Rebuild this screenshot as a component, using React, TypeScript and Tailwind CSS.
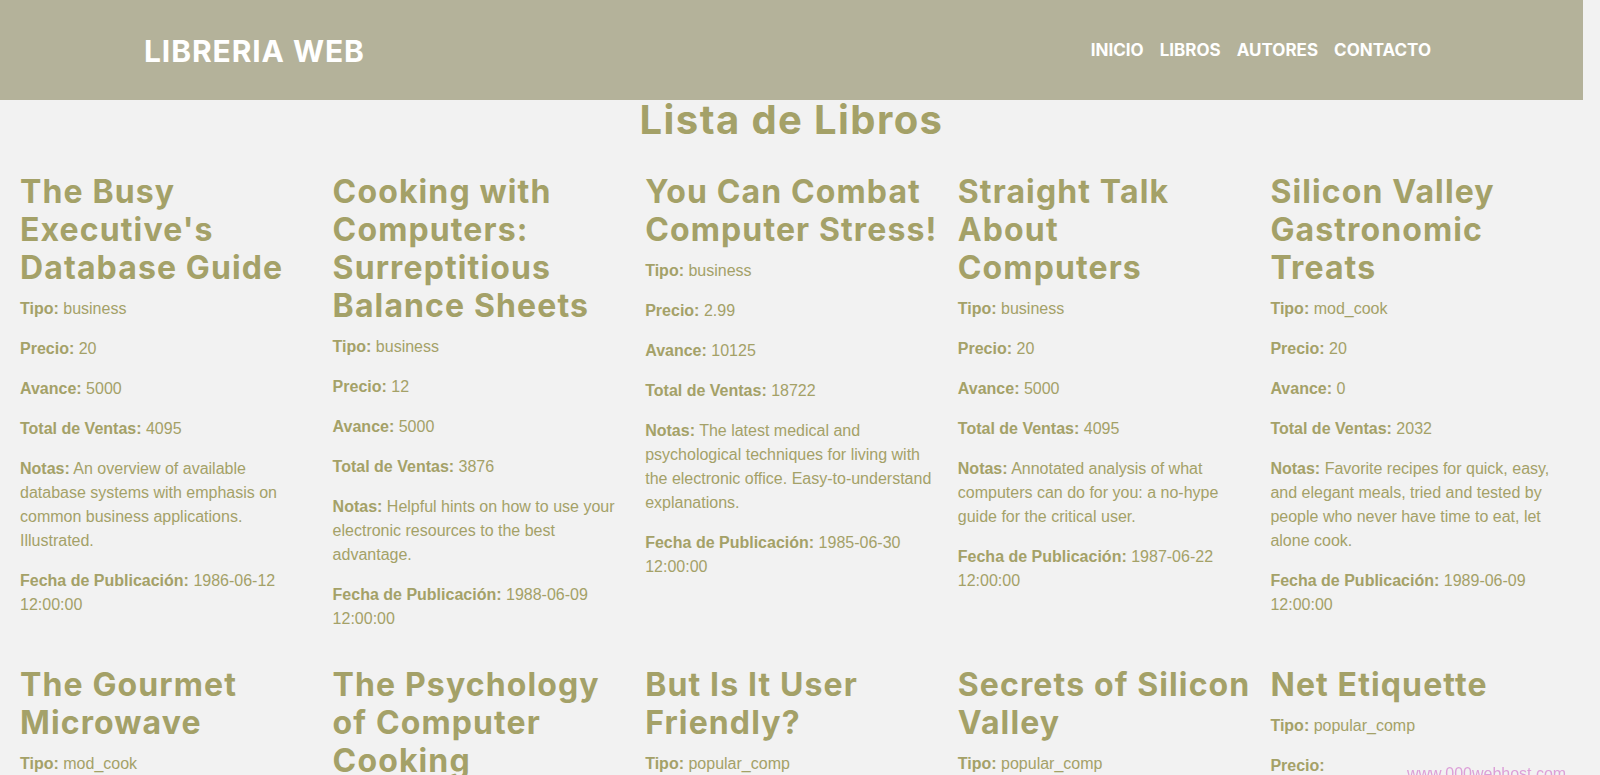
import React from 'react';

interface Libro {
  titulo: string;
  tipo: string;
  precio: string;
  avance: string;
  ventas: string;
  notas: string;
  fecha: string;
}

const libros: Libro[] = [
  {
    titulo: "The Busy Executive's Database Guide",
    tipo: 'business',
    precio: '20',
    avance: '5000',
    ventas: '4095',
    notas: 'An overview of available database systems with emphasis on common business applications. Illustrated.',
    fecha: '1986-06-12 12:00:00',
  },
  {
    titulo: 'Cooking with Computers: Surreptitious Balance Sheets',
    tipo: 'business',
    precio: '12',
    avance: '5000',
    ventas: '3876',
    notas: 'Helpful hints on how to use your electronic resources to the best advantage.',
    fecha: '1988-06-09 12:00:00',
  },
  {
    titulo: 'You Can Combat Computer Stress!',
    tipo: 'business',
    precio: '2.99',
    avance: '10125',
    ventas: '18722',
    notas: 'The latest medical and psychological techniques for living with the electronic office. Easy-to-understand explanations.',
    fecha: '1985-06-30 12:00:00',
  },
  {
    titulo: 'Straight Talk About Computers',
    tipo: 'business',
    precio: '20',
    avance: '5000',
    ventas: '4095',
    notas: 'Annotated analysis of what computers can do for you: a no-hype guide for the critical user.',
    fecha: '1987-06-22 12:00:00',
  },
  {
    titulo: 'Silicon Valley Gastronomic Treats',
    tipo: 'mod_cook',
    precio: '20',
    avance: '0',
    ventas: '2032',
    notas: 'Favorite recipes for quick, easy, and elegant meals, tried and tested by people who never have time to eat, let alone cook.',
    fecha: '1989-06-09 12:00:00',
  },
  {
    titulo: 'The Gourmet Microwave',
    tipo: 'mod_cook',
    precio: '2.99',
    avance: '15000',
    ventas: '22246',
    notas: 'Traditional French gourmet recipes adapted for modern microwave cooking.',
    fecha: '1985-06-18 12:00:00',
  },
  {
    titulo: 'The Psychology of Computer Cooking',
    tipo: 'UNDECIDED',
    precio: '',
    avance: '',
    ventas: '',
    notas: '',
    fecha: '2000-08-06 01:33:54',
  },
  {
    titulo: 'But Is It User Friendly?',
    tipo: 'popular_comp',
    precio: '22.95',
    avance: '7000',
    ventas: '8780',
    notas: "A survey of software for the naive user, focusing on the 'friendliness' of each.",
    fecha: '1986-06-30 12:00:00',
  },
  {
    titulo: 'Secrets of Silicon Valley',
    tipo: 'popular_comp',
    precio: '20',
    avance: '8000',
    ventas: '4095',
    notas: "Muckraking reporting on the world's largest computer hardware and software manufacturers.",
    fecha: '1994-06-12 12:00:00',
  },
  {
    titulo: 'Net Etiquette',
    tipo: 'popular_comp',
    precio: '',
    avance: '',
    ventas: '',
    notas: 'A must-read for computer conferencing.',
    fecha: '2000-08-06 01:33:54',
  },
];

// Montserrat isn't installed, Inter with a little tracking is the closest fit
const heading = { fontFamily: 'Inter, "Open Sans", sans-serif' };

const Campo = ({ label, value }: { label: string; value: string }) => (
  <p>
    <b>{label}:</b> {value}
  </p>
);

const LibroCard = ({ libro }: { libro: Libro }) => (
  <div className="flex flex-col">
    <h2 className="text-[32px] leading-[38px] font-bold tracking-[0.035em] mb-[10px]" style={heading}>
      {libro.titulo}
    </h2>
    <div className="flex flex-col gap-4">
      <Campo label="Tipo" value={libro.tipo} />
      <Campo label="Precio" value={libro.precio} />
      <Campo label="Avance" value={libro.avance} />
      <Campo label="Total de Ventas" value={libro.ventas} />
      <Campo label="Notas" value={libro.notas} />
      <Campo label="Fecha de Publicación" value={libro.fecha} />
    </div>
  </div>
);

export default function App() {
  return (
    <div className="h-[775px] overflow-hidden bg-[#f2f2f2] text-[#a4a168]">
      <div className="mr-[17px]">
        <header className="h-[100px] bg-[#b4b29a] flex items-center justify-between pl-[144px] pr-[152px] pt-[2px] text-white" style={heading}>
          <span className="text-[30px] font-bold tracking-[0.03em]">LIBRERIA WEB</span>
          <nav className="flex gap-[16px] text-[17px] font-bold">
            <a href="#">INICIO</a>
            <a href="#">LIBROS</a>
            <a href="#">AUTORES</a>
            <a href="#">CONTACTO</a>
          </nav>
        </header>

        <h1 className="text-center text-[40px] leading-[40px] font-bold tracking-[0.035em]" style={heading}>
          Lista de Libros
        </h1>

        <div
          className="grid grid-cols-5 gap-x-5 gap-y-[35px] px-5 mt-[33px] text-[16px] leading-6"
          style={{ fontFamily: '"Liberation Sans", Arial, sans-serif' }}
        >
          {libros.map((libro) => (
            <LibroCard key={libro.titulo} libro={libro} />
          ))}
        </div>
      </div>

      <div
        className="fixed left-[1407px] top-[762px] text-[16px] leading-6 text-[#dca0d8]"
        style={{ fontFamily: '"Liberation Sans", Arial, sans-serif' }}
      >
        www.000webhost.com
      </div>
    </div>
  );
}
